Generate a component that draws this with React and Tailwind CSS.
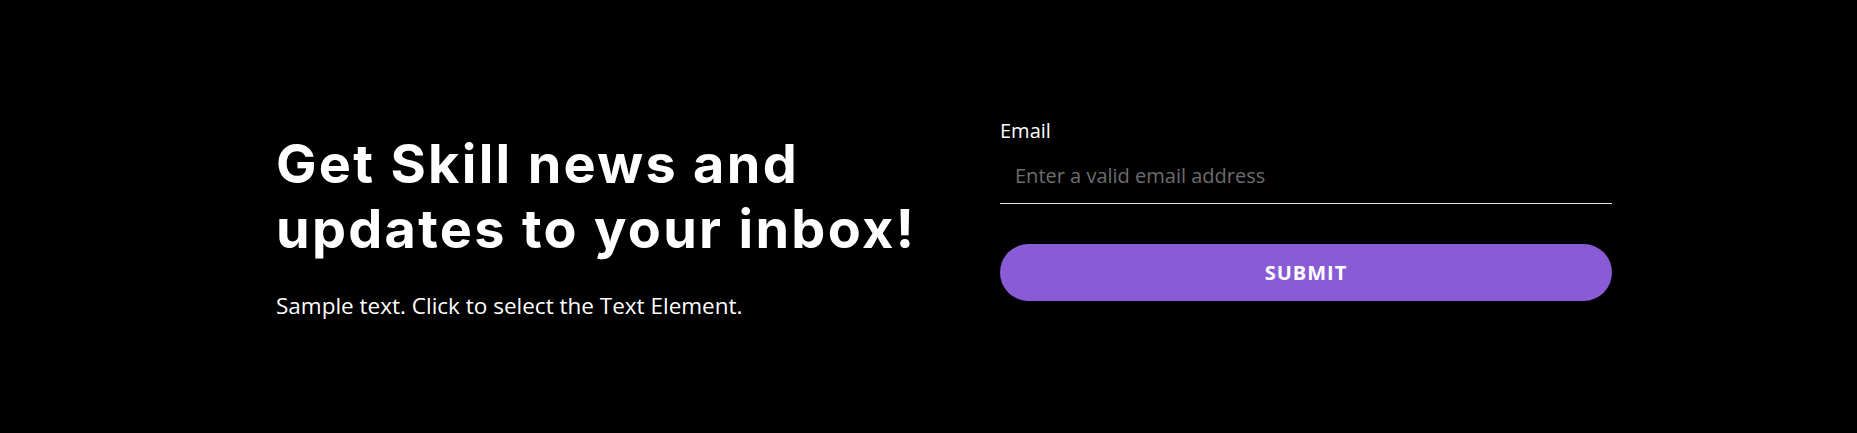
export default function App() {
  return (
    <div className="h-[433px] w-full bg-black flex items-start pl-[276px] pt-[117px] font-['Open_Sans',sans-serif] text-white">
      {/* Left: headline */}
      <div className="w-[724px] shrink-0 mt-[14px]">
        <h2 className="font-['Inter',sans-serif] font-bold text-[54px] leading-[65px] tracking-[2.3px]">
          Get Skill news and
          <br />
          updates to your inbox!
        </h2>
        <p className="mt-[30px] text-[22.5px] leading-[30px]">Sample text. Click to select the Text Element.</p>
      </div>

      {/* Right: signup form */}
      <form className="w-[612px] shrink-0" onSubmit={(e) => e.preventDefault()}>
        <label className="block text-[20px] leading-[27px] mb-[4px]">Email</label>
        <input
          type="email"
          placeholder="Enter a valid email address"
          className="block w-full bg-transparent border-b border-[#e0e0e0] px-[15px] py-[14px] text-[20px] leading-[27px] text-white placeholder:text-[#6d6d6d] outline-none"
        />
        <button
          type="submit"
          className="mt-[40px] w-full h-[57px] rounded-full bg-[#8a5bd6] text-white font-bold text-[20px] tracking-[1px]"
        >
          SUBMIT
        </button>
      </form>
    </div>
  );
}
